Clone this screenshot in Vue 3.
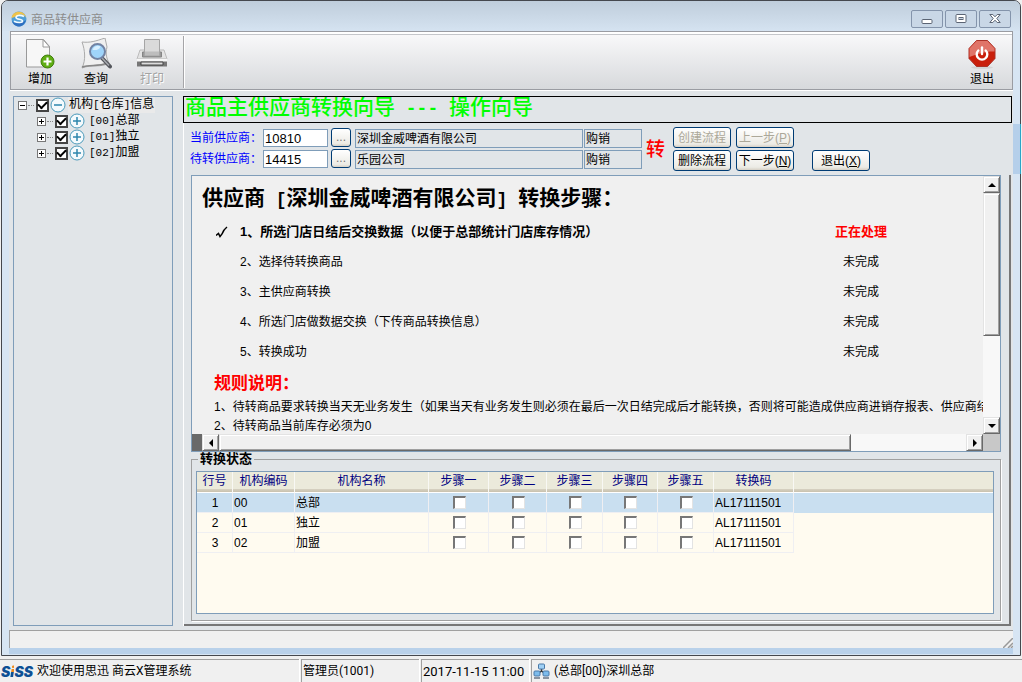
<script setup>
import { ref } from 'vue'

const branches = [
  { code: '[00]', name: '总部' },
  { code: '[01]', name: '独立' },
  { code: '[02]', name: '加盟' },
]

const suppliers = ref([
  { id: 'current', label: '当前供应商：', code: '10810', name: '深圳金威啤酒有限公司', type: '购销' },
  { id: 'target', label: '待转供应商：', code: '14415', name: '乐园公司', type: '购销' },
])

const steps = [
  { text: '1、所选门店日结后交换数据（以便于总部统计门店库存情况）', state: '正在处理', active: true },
  { text: '2、选择待转换商品', state: '未完成' },
  { text: '3、主供应商转换', state: '未完成' },
  { text: '4、所选门店做数据交换（下传商品转换信息）', state: '未完成' },
  { text: '5、转换成功', state: '未完成' },
]

const rules = [
  '1、待转商品要求转换当天无业务发生（如果当天有业务发生则必须在最后一次日结完成后才能转换，否则将可能造成供应商进销存报表、供应商结',
  '2、待转商品当前库存必须为0',
]

const stepNames = ['步骤一', '步骤二', '步骤三', '步骤四', '步骤五']

const rows = [
  { code: '00', name: '总部', batch: 'AL17111501' },
  { code: '01', name: '独立', batch: 'AL17111501' },
  { code: '02', name: '加盟', batch: 'AL17111501' },
]
</script>

<template>
  <div class="screen">
    <div class="window">
      <div class="backdrop-edge"></div>
      <header class="titlebar">
        <svg class="app-icon" width="16" height="16" viewBox="0 0 16 16">
          <circle cx="8" cy="8" r="7.5" fill="#4f9fd8" />
          <path d="M.5 7C1 2 6-.5 11 1.200c2 1 4 3.300 4 5.300-2-2.500-4-3.500-7-2.500-3 .5-5 3-7.500 3z" fill="#f0c34a" />
          <path d="M1 10c3 3 8 3 14-1-1 4-4 6.500-7 6.500S1.500 13 1 10z" fill="#2f6fc0" />
          <path d="M13 5.500C9 3.500 5 4.500 5 6.500c0 2.300 6.500 1.300 6.500 3.500 0 1.800-4.500 2-8.500.2" fill="none" stroke="#f4fbff" stroke-width="1.600" />
        </svg>
        <span class="title">商品转供应商</span>
        <div class="window-buttons">
          <button type="button" aria-label="最小化">
            <svg width="12" height="12" viewBox="0 0 12 12"><rect x="1" y="6.500" width="10" height="4" rx="1" fill="#fff" stroke="#5b6474" /></svg>
          </button>
          <button type="button" aria-label="最大化">
            <svg width="12" height="12" viewBox="0 0 12 12"><rect x="1" y="1.500" width="10" height="8" rx="1" fill="#fff" stroke="#5b6474" /><rect x="4" y="4.500" width="4" height="2" fill="#c8d4e2" stroke="#5b6474" /></svg>
          </button>
          <button type="button" aria-label="关闭">
            <svg width="12" height="12" viewBox="0 0 12 12"><path d="M.8 1.500h3L6 3.800l2.200-2.300h3L7.800 5.500l3.400 4h-3L6 7.200 3.800 9.500h-3l3.400-4z" fill="#fff" stroke="#5b6474" /></svg>
          </button>
        </div>
      </header>

      <div class="client">
        <nav class="toolbar">
          <button type="button" class="tool">
            <svg width="32" height="32" viewBox="0 0 32 32">
              <path d="M2.500 1.500h17l6 7v20.500h-23z" fill="#f7f7f7" stroke="#999" />
              <path d="M19 1.500v7.500h6.500z" fill="#fff" stroke="#999" />
              <circle cx="23.500" cy="23.500" r="6.500" fill="#5fae13" stroke="#3f7d0b" />
              <path d="M23.500 19.500v8M19.500 23.500h8" stroke="#fff" stroke-width="2.200" />
            </svg>
            <span>增加</span>
          </button>
          <button type="button" class="tool">
            <svg width="32" height="32" viewBox="0 0 32 32">
              <path d="M2 4c8 1 14-1 23-4l2 9c-2 7 0 12 2 16-8 5-17 1-27 5 4-8 3-18 0-26z" fill="#f0f0f0" stroke="#aaa" />
              <path d="M2 29c8-3 16 0 25-4" fill="none" stroke="#888" stroke-width="1.500" />
              <path d="M22 20l8 8.500" stroke="#54565c" stroke-width="4" stroke-linecap="round" />
              <path d="M22 20l7 7.500" stroke="#a9abb0" stroke-width="1.500" />
              <circle cx="17.500" cy="13.500" r="7.500" fill="#9fd4fa" stroke="#7283a3" stroke-width="2" />
              <path d="M12.500 12a5.500 5.500 0 0 1 8-3.500c-1 3-4 4-8 3.500z" fill="#d8f0ff" />
            </svg>
            <span>查询</span>
          </button>
          <button type="button" class="tool" disabled>
            <svg width="32" height="32" viewBox="0 0 32 32">
              <path d="M4 12h24l3 9H1z" fill="#e4e4e4" stroke="#bbb" />
              <path d="M6.500 14h19v5h-19z" fill="#9a9a9a" stroke="#858585" />
              <path d="M8.500 1.500h15v16h-15z" fill="#dadada" stroke="#a5a5a5" />
              <path d="M9 13.500h14v4H9z" fill="#bdbdbd" />
              <path d="M1 20.500h30v8H1z" fill="#777" />
              <path d="M1 20.500h30v3H1z" fill="#f7f7f7" />
              <path d="M5 24h22v3H5z" fill="#ddd" stroke="#444" />
            </svg>
            <span>打印</span>
          </button>
          <i class="tool-divider"></i>
          <button type="button" class="tool tool-exit">
            <svg width="32" height="32" viewBox="0 0 32 32">
              <ellipse cx="16" cy="29.500" rx="11" ry="1.500" fill="#d3d3d3" />
              <path d="M10.500 2.500h11l7.500 8v10l-7.500 8h-11l-7.500-8v-10z" fill="#c91f0b" stroke="#ab3329" />
              <path d="M10.500 3h11l7 7.500v3C21 13 11 16 3.500 19v-8.500z" fill="#e07468" />
              <path d="M12.300 12.500a5.300 5.300 0 1 0 7.400 0" fill="none" stroke="#fff" stroke-width="2.400" stroke-linecap="round" />
              <path d="M16 9.500v6.500" stroke="#fff" stroke-width="2.400" stroke-linecap="round" />
            </svg>
            <span>退出</span>
          </button>
        </nav>

        <div class="body">
          <aside class="tree">
            <div class="node root">
              <svg class="expander" width="9" height="9" viewBox="0 0 9 9"><rect x=".5" y=".5" width="8" height="8" fill="#fff" stroke="#777" /><path d="M2 4.500h5" stroke="#000" /></svg>
              <i class="dots"></i>
              <label>
                <input type="checkbox" class="tick" checked />
                <svg width="16" height="16" viewBox="0 0 16 16"><circle cx="8" cy="8" r="7" fill="#f4fafd" stroke="#4b9aba" /><path d="M4 8h8" stroke="#2d86ad" stroke-width="1.500" /></svg>
                <span class="node-text lit">机构<span class="mono">[</span>仓库<span class="mono">]</span>信息</span>
              </label>
            </div>
            <div v-for="b in branches" :key="b.code" class="node child">
              <svg class="expander" width="9" height="9" viewBox="0 0 9 9"><rect x=".5" y=".5" width="8" height="8" fill="#fff" stroke="#777" /><path d="M2 4.500h5M4.500 2v5" stroke="#000" /></svg>
              <i class="dots"></i>
              <label>
                <input type="checkbox" class="tick" checked />
                <svg width="16" height="16" viewBox="0 0 16 16"><circle cx="8" cy="8" r="7" fill="#f4fafd" stroke="#4b9aba" /><path d="M4 8h8M8 4v8" stroke="#2d86ad" stroke-width="1.500" /></svg>
                <span class="node-text"><span class="mono">{{ b.code }}</span>{{ b.name }}</span>
              </label>
            </div>
          </aside>

          <main class="main">
            <h1 class="banner">商品主供应商转换向导<span class="wide-mono">&nbsp;---&nbsp;</span>操作向导</h1>

            <div class="form">
              <div class="fields">
                <template v-for="s in suppliers" :key="s.id">
                  <label :for="s.id">{{ s.label }}</label>
                  <input :id="s.id" v-model="s.code" type="text" class="code" />
                  <button type="button" class="btn pick" :aria-label="s.label + '选择'">...</button>
                  <output>{{ s.name }}</output>
                  <output>{{ s.type }}</output>
                </template>
              </div>
              <div class="convert">转</div>
              <div class="actions">
                <button type="button" class="btn" disabled>创建流程</button>
                <button type="button" class="btn" disabled>上一步(<u>P</u>)</button>
                <span></span>
                <button type="button" class="btn">删除流程</button>
                <button type="button" class="btn">下一步(<u>N</u>)</button>
                <button type="button" class="btn exit">退出(<u>X</u>)</button>
              </div>
            </div>

            <div class="lower">
              <section class="guide">
                <div class="guide-view">
                  <h2>供应商<span class="wide-mono">&nbsp;[</span>深圳金威啤酒有限公司<span class="wide-mono">]&nbsp;</span>转换步骤：</h2>
                  <div v-for="s in steps" :key="s.text" class="step" :class="{ active: s.active }">
                    <span class="mark">
                      <svg v-if="s.active" width="13" height="13" viewBox="0 0 13 13"><path d="M0 9.500l2.500-2L4 10.500l2-2.500c1-3 3-5.500 5-7" fill="none" stroke="#000" stroke-width="1.500" /></svg>
                    </span>
                    <span>{{ s.text }}</span>
                    <span class="state">{{ s.state }}</span>
                  </div>
                  <h3>规则说明：</h3>
                  <p v-for="r in rules" :key="r">{{ r }}</p>
                </div>
                <div class="vbar">
                  <button type="button" class="arrow" aria-label="向上"><svg width="8" height="4" viewBox="0 0 8 4"><path d="M0 4l4-4 4 4z" /></svg></button>
                  <i class="thumb"></i>
                  <i class="track"></i>
                  <button type="button" class="arrow" aria-label="向下"><svg width="8" height="4" viewBox="0 0 8 4"><path d="M0 0l4 4 4-4z" /></svg></button>
                </div>
                <div class="hbar">
                  <i class="split"></i>
                  <button type="button" class="arrow" aria-label="向左"><svg width="4" height="8" viewBox="0 0 4 8"><path d="M4 0L0 4l4 4z" /></svg></button>
                  <i class="thumb"></i>
                  <i class="track"></i>
                  <button type="button" class="arrow" aria-label="向右"><svg width="4" height="8" viewBox="0 0 4 8"><path d="M0 0l4 4-4 4z" /></svg></button>
                </div>
                <i class="corner"></i>
              </section>

              <fieldset class="status">
                <legend>转换状态</legend>
                <div class="grid">
                  <table>
                    <colgroup>
                      <col class="c-no" /><col class="c-code" /><col class="c-name" />
                      <col class="c-s1" /><col class="c-s2" /><col class="c-s3" /><col class="c-s4" /><col class="c-s5" />
                      <col class="c-batch" /><col />
                    </colgroup>
                    <thead>
                      <tr>
                        <th>行号</th>
                        <th>机构编码</th>
                        <th>机构名称</th>
                        <th v-for="n in stepNames" :key="n">{{ n }}</th>
                        <th>转换码</th>
                        <th class="filler"></th>
                      </tr>
                    </thead>
                    <tbody>
                      <tr v-for="(r, i) in rows" :key="r.code" :class="{ selected: i === 0 }">
                        <td class="center">{{ i + 1 }}</td>
                        <td>{{ r.code }}</td>
                        <td>{{ r.name }}</td>
                        <td v-for="n in stepNames" :key="n" class="center"><input type="checkbox" class="box" :aria-label="r.name + n" /></td>
                        <td>{{ r.batch }}</td>
                        <td class="filler"></td>
                      </tr>
                    </tbody>
                  </table>
                </div>
              </fieldset>
            </div>
          </main>
        </div>

        <div class="message-bar">
          <svg width="10" height="10" viewBox="0 0 10 10"><path d="M0 10L10 0M5 10l5-5M8 10l2-2" stroke="#999" stroke-width="1.500" /></svg>
        </div>
      </div>
    </div>

    <footer class="statusbar">
      <div class="cell welcome"><b class="logo">S<span>i</span>SS</b>欢迎使用思迅 商云X管理系统</div>
      <div class="cell user">管理员(1001)</div>
      <div class="cell time">2017-11-15 11:00</div>
      <div class="cell branch">
        <svg width="17" height="16" viewBox="0 0 17 16">
          <path d="M8.500 5v4M8.500 8l-4 3M8.500 8l4 3" stroke="#333" stroke-width="1.500" />
          <rect x="5.500" y="1" width="6" height="5" rx="1" fill="#9fd0f5" stroke="#4a79a8" />
          <rect x="1" y="8" width="6" height="5" rx="1" fill="#7dbcec" stroke="#4a79a8" />
          <rect x="10" y="8" width="6" height="5" rx="1" fill="#7dbcec" stroke="#4a79a8" />
          <path d="M1 15h6M10 15h6" stroke="#8a93a0" stroke-width="2" />
        </svg>
        <span>(总部[00])深圳总部</span>
      </div>
    </footer>
  </div>
</template>

<style>
body {
  margin: 0;
}
</style>

<style scoped>
* {
  box-sizing: border-box;
}
.screen {
  display: flex;
  flex-direction: column;
  min-height: 100vh;
  background: #f0f0f0;
  color: #000;
  font-family: "Liberation Sans", "Noto Sans CJK SC", sans-serif;
  font-size: 12px;
  line-height: 16px;
}
button,
input {
  font: inherit;
  color: inherit;
  margin: 0;
  padding: 0;
}
h1, h2, h3, p {
  margin: 0;
}
i {
  display: block;
}
svg {
  display: block;
  flex: none;
}
.mono {
  font-family: "Liberation Mono", monospace;
  font-size: 11px;
}
.wide-mono {
  font-family: "Liberation Mono", monospace;
  font-size: 18px;
}

/* window frame */
.window {
  position: relative;
  flex: 1;
  display: flex;
  flex-direction: column;
  margin: 0 1px;
  padding: 0 7px 1px;
  border: 1px solid #45484e;
  border-radius: 7px 7px 0 0;
  background: #d7e5f3;
}
.backdrop-edge {
  position: absolute;
  top: 123px;
  right: -1px;
  width: 8px;
  height: 50px;
  background: #b5cfea;
  border-right: 1px solid #29a5c8;
}
.titlebar {
  display: flex;
  align-items: center;
  height: 30px;
  margin: 0 -7px;
  padding: 6px 9px 0;
  border-radius: 6px 6px 0 0;
  background: linear-gradient(#bfcddb, #d5e3f1);
}
.titlebar .title {
  margin-left: 4px;
  padding-top: 1px;
  color: #8c8c8c;
}
.window-buttons {
  display: flex;
  gap: 2px;
  margin-left: auto;
}
.window-buttons button {
  display: flex;
  align-items: center;
  justify-content: center;
  width: 32px;
  height: 18px;
  border: 1px solid #8494ab;
  border-radius: 2px;
  background: #c9d7e6;
}
.client {
  flex: 1;
  display: flex;
  flex-direction: column;
  background: #e1e5e8;
  border-bottom: 6px solid #b9d1ea;
}
.toolbar {
  display: flex;
  height: 59px;
  margin: 0 0 0 1px;
  padding: 6px 2px 0 1px;
  border: 1px solid #9a9ca2;
  box-shadow: inset 0 2px 0 #fff, inset 0 3px 0 #c4c6ca, 0 1px 0 #fff;
  background: linear-gradient(#fafafb, #d7d9dc);
}
.tool {
  display: flex;
  flex-direction: column;
  align-items: center;
  gap: 1px;
  width: 56px;
  height: 51px;
  border: 0;
  background: none;
}
.tool:disabled {
  color: #a3a3a3;
  text-shadow: 1px 1px 0 #fff;
}
.tool-divider {
  width: 2px;
  height: 52px;
  margin: -2px 0 0 3px;
  border-left: 1px solid #a5a5a8;
  border-right: 1px solid #fff;
}
.tool-exit {
  margin-left: auto;
}

/* body */
.body {
  flex: 1;
  display: flex;
  gap: 10px;
  padding: 6px 1px 4px 4px;
}
.tree {
  width: 160px;
  border: 1px solid #7f9db9;
}
.node {
  display: flex;
  align-items: center;
  height: 16px;
}
.node label {
  display: flex;
  align-items: center;
}
.root {
  padding-left: 4px;
}
.child {
  padding-left: 23px;
}
.dots {
  width: 6px;
  margin: 0 2px 0 1px;
  border-top: 1px dotted #888;
}
.tick {
  appearance: none;
  width: 13px;
  height: 13px;
  margin-right: 1px;
  border: 2px solid #444;
  background: #fff;
  display: grid;
  place-items: center;
}
.tick:checked::before {
  content: "";
  width: 7px;
  height: 4px;
  margin-top: -2px;
  border: solid #000;
  border-width: 0 0 2px 2px;
  transform: rotate(-45deg);
}
.node-text {
  margin-left: 3px;
  padding: 0 1px;
  line-height: 15px;
  white-space: nowrap;
}
.lit {
  margin-left: 2px;
  background: #eaeaea;
}
.main {
  flex: 1;
  min-width: 0;
  display: flex;
  flex-direction: column;
  border-left: 1px solid #fff;
}
.banner {
  height: 27px;
  margin-left: -1px;
  padding-left: 1px;
  border: 1px solid #000;
  color: #0f0;
  font-size: 21px;
  font-weight: 500;
  line-height: 20px;
  white-space: nowrap;
  overflow: hidden;
}
.banner .wide-mono {
  font-weight: bold;
}
.form {
  display: flex;
  height: 52px;
  padding: 4px 0 0 6px;
}
.fields {
  display: grid;
  grid-template-columns: 73px 65px 23px 232px 59px;
  grid-template-rows: 19px 19px;
  row-gap: 2px;
  padding-top: 2px;
}
.fields label {
  color: #00f;
  line-height: 18px;
  white-space: nowrap;
}
.code {
  height: 18px;
  padding-left: 1px;
  border: 1px solid #7f9db9;
  background: #fff;
  font-size: 13px;
}
.fields .pick {
  width: 20px;
  height: 19px;
  margin: -1px 0 0 3px;
  line-height: 17px;
  color: #777;
}
.fields output {
  margin-left: 4px;
  padding-left: 1px;
  border: 1px solid #7f9db9;
  line-height: 19px;
  white-space: nowrap;
}
.fields output + output {
  margin-left: 1px;
}
.convert {
  width: 27px;
  margin-right: 4px;
  color: #f00;
  font-size: 19px;
  font-weight: 500;
  line-height: 46px;
  text-align: center;
}
.actions {
  display: grid;
  grid-template-columns: 58px 58px 71px;
  grid-template-rows: 21px 21px;
  gap: 2px 5px;
}
.btn {
  border: 1px solid #003c74;
  border-radius: 3px;
  background: linear-gradient(#fff, #ecebe5 85%, #d6d0c5);
  line-height: 21px;
  white-space: nowrap;
}
.btn:disabled {
  color: #aca899;
}
.exit {
  margin-left: 13px;
}

/* lower half */
.lower {
  flex: 1;
  display: flex;
  flex-direction: column;
  margin-right: 1px;
  padding: 0 8px 3px 7px;
  border: solid #777;
  border-width: 0 2px 2px 0;
}
.guide {
  display: grid;
  grid-template-columns: minmax(0, 1fr) 17px;
  grid-template-rows: 258px 17px;
  border: 1px solid #7f9db9;
  background: #f0f0f0;
}
.guide-view {
  overflow: hidden;
  white-space: nowrap;
}
.guide h2 {
  height: 41px;
  padding: 2px 0 0 10px;
  font-size: 21px;
  line-height: 39px;
}
.step {
  display: grid;
  grid-template-columns: 48px 568px 106px;
  height: 30px;
  line-height: 30px;
}
.mark {
  padding: 9px 0 0 24px;
}
.state {
  text-align: center;
}
.active {
  font-size: 13px;
  font-weight: bold;
}
.active .state {
  color: #f00;
}
.guide h3 {
  height: 31px;
  padding: 3px 0 0 22px;
  color: #f00;
  font-size: 17px;
  line-height: 28px;
}
.guide p {
  height: 19px;
  padding-left: 22px;
  line-height: 19px;
}
.vbar {
  display: flex;
  flex-direction: column;
}
.hbar {
  display: flex;
}
.arrow,
.thumb {
  border: 1px solid #696969;
  border-top-color: #e3e3e3;
  border-left-color: #e3e3e3;
  box-shadow: inset 1px 1px 0 #fff, inset -1px -1px 0 #a0a0a0;
  background: #f0f0f0;
}
.arrow {
  display: flex;
  align-items: center;
  justify-content: center;
  width: 17px;
  height: 17px;
}
.vbar .thumb {
  flex: 142;
}
.vbar .track {
  flex: 82;
}
.hbar .thumb {
  flex: 633;
}
.hbar .track {
  flex: 115;
}
.track {
  background: #f8f8f8;
}
.split {
  width: 10px;
  background: #696969;
}
.corner {
  background: #c8c8c8;
}
.status {
  flex: 1;
  display: flex;
  min-width: 0;
  margin: 0;
  padding: 5px 6px 6px 4px;
  border: 1px solid #a0a0a0;
  box-shadow: 1px 1px 0 #fff;
}
.status legend {
  margin-left: 2px;
  padding: 0 2px;
  font-size: 13px;
  font-weight: bold;
  line-height: 14px;
}
.grid {
  flex: 1;
  border: 1px solid #7f9db9;
  background: #fffbf0;
}
table {
  width: 100%;
  table-layout: fixed;
  border-collapse: separate;
  border-spacing: 0;
}
.c-no { width: 36px; }
.c-code { width: 62px; }
.c-name { width: 134px; }
.c-s1 { width: 60px; }
.c-s2 { width: 58px; }
.c-s3, .c-s5 { width: 56px; }
.c-s4 { width: 55px; }
.c-batch { width: 80px; }
th {
  height: 21px;
  padding: 0;
  border-right: 1px solid #f8f8f4;
  border-bottom: 1px solid #fff;
  background: linear-gradient(#ebeadb 17px, #d6d2c2 17px, #c9c1ae);
  color: #000080;
  font-weight: normal;
  line-height: 19px;
  vertical-align: top;
}
td {
  height: 20px;
  padding: 2px 0 0 1px;
  border-right: 1px solid #efeff2;
  border-bottom: 1px solid #efeff2;
  font-size: 12px;
  line-height: 17px;
}
td.center {
  text-align: center;
}
th.filler,
td.filler {
  border-right: 0;
}
td.filler {
  border-bottom: 0;
}
.selected td {
  background: #c9dff0;
}
.box {
  appearance: none;
  display: block;
  width: 13px;
  height: 13px;
  margin: -3px auto 0;
  border: 2px solid #777;
  border-right: 1px solid #e3e3e3;
  border-bottom: 1px solid #e3e3e3;
  background: #fff;
}
.message-bar {
  display: flex;
  align-items: flex-end;
  justify-content: flex-end;
  height: 18px;
  border: 1px solid #a0a0a0;
  border-width: 1px 0 0 1px;
  background: #f0f0f0;
}

/* application status bar */
.statusbar {
  display: flex;
  gap: 2px;
  height: 26px;
  padding-top: 3px;
  font-family: Roboto, "Noto Sans CJK SC", sans-serif;
  line-height: 23px;
  white-space: nowrap;
}
.cell {
  padding-left: 1px;
  border: 1px solid #a0a0a0;
  border-width: 1px 0 0 1px;
  box-shadow: 1px 0 0 #fff;
}
.welcome {
  display: flex;
  gap: 3px;
  width: 299px;
  border-left: 0;
}
.user {
  width: 118px;
}
.time {
  width: 108px;
  font-size: 13px;
}
.branch {
  flex: 1;
  display: flex;
  align-items: center;
  gap: 4px;
}
.logo {
  width: 33px;
  color: #0d4f94;
  font-family: Inter, sans-serif;
  font-size: 14px;
  font-weight: 900;
  font-style: italic;
}
.logo span {
  background: linear-gradient(#f08a1c 9px, #0d4f94 9px);
  background-clip: text;
  color: transparent;
}
</style>
